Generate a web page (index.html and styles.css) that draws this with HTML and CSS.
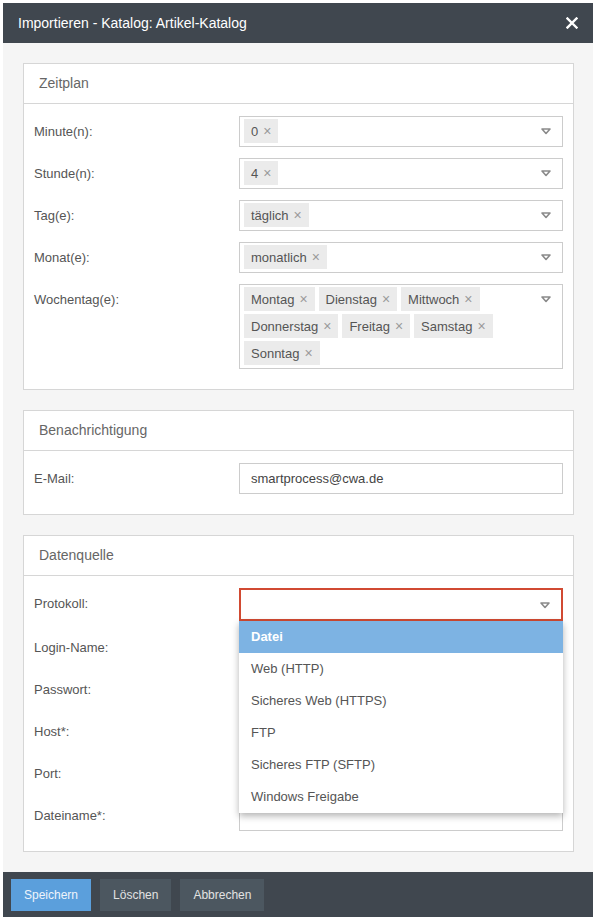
FILE: index.html
```html
<html>
    <head>
        <link rel="stylesheet" href="styles.css">
    </head>
    <body>
        <div class="modal">
            <div class="modal-header">
                <span class="title">Importieren - Katalog: Artikel-Katalog</span>
                <svg class="close" width="12" height="12" viewBox="0 0 12 12"><path d="M1.5 1.5 L10.5 10.5 M10.5 1.5 L1.5 10.5" stroke="#fff" stroke-width="2.4" stroke-linecap="square"/></svg>
            </div>

            <div class="modal-body">
                <div class="panel">
                    <div class="panel-heading">Zeitplan</div>
                    <div class="panel-body">
                        <div class="row">
                            <label>Minute(n):</label>
                            <div class="select">
                                <div class="tags"><span class="tag">0<span class="x">×</span></span></div>
                                <svg class="caret" width="10" height="7" viewBox="0 0 10 7"><path d="M1 1 H9 L5 5.5 Z" fill="none" stroke="#8a8a8a" stroke-width="1.6" stroke-linejoin="round"/></svg>
                            </div>
                        </div>
                        <div class="row">
                            <label>Stunde(n):</label>
                            <div class="select">
                                <div class="tags"><span class="tag">4<span class="x">×</span></span></div>
                                <svg class="caret" width="10" height="7" viewBox="0 0 10 7"><path d="M1 1 H9 L5 5.5 Z" fill="none" stroke="#8a8a8a" stroke-width="1.6" stroke-linejoin="round"/></svg>
                            </div>
                        </div>
                        <div class="row">
                            <label>Tag(e):</label>
                            <div class="select">
                                <div class="tags"><span class="tag">täglich<span class="x">×</span></span></div>
                                <svg class="caret" width="10" height="7" viewBox="0 0 10 7"><path d="M1 1 H9 L5 5.5 Z" fill="none" stroke="#8a8a8a" stroke-width="1.6" stroke-linejoin="round"/></svg>
                            </div>
                        </div>
                        <div class="row">
                            <label>Monat(e):</label>
                            <div class="select">
                                <div class="tags"><span class="tag">monatlich<span class="x">×</span></span></div>
                                <svg class="caret" width="10" height="7" viewBox="0 0 10 7"><path d="M1 1 H9 L5 5.5 Z" fill="none" stroke="#8a8a8a" stroke-width="1.6" stroke-linejoin="round"/></svg>
                            </div>
                        </div>
                        <div class="row">
                            <label>Wochentag(e):</label>
                            <div class="select">
                                <div class="tags">
                                    <span class="tag">Montag<span class="x">×</span></span>
                                    <span class="tag">Dienstag<span class="x">×</span></span>
                                    <span class="tag">Mittwoch<span class="x">×</span></span>
                                    <span class="tag">Donnerstag<span class="x">×</span></span>
                                    <span class="tag">Freitag<span class="x">×</span></span>
                                    <span class="tag">Samstag<span class="x">×</span></span>
                                    <span class="tag">Sonntag<span class="x">×</span></span>
                                </div>
                                <svg class="caret" width="10" height="7" viewBox="0 0 10 7"><path d="M1 1 H9 L5 5.5 Z" fill="none" stroke="#8a8a8a" stroke-width="1.6" stroke-linejoin="round"/></svg>
                            </div>
                        </div>
                    </div>
                </div>

                <div class="panel">
                    <div class="panel-heading">Benachrichtigung</div>
                    <div class="panel-body">
                        <div class="row">
                            <label>E-Mail:</label>
                            <div class="input">smartprocess@cwa.de</div>
                        </div>
                    </div>
                </div>

                <div class="panel">
                    <div class="panel-heading">Datenquelle</div>
                    <div class="panel-body">
                        <div class="row">
                            <label>Protokoll:</label>
                            <div class="select open">
                                <div class="tags"></div>
                                <svg class="caret" width="10" height="7" viewBox="0 0 10 7"><path d="M1 1 H9 L5 5.5 Z" fill="none" stroke="#8a8a8a" stroke-width="1.6" stroke-linejoin="round"/></svg>
                                <ul class="dropdown">
                                    <li class="active">Datei</li>
                                    <li>Web (HTTP)</li>
                                    <li>Sicheres Web (HTTPS)</li>
                                    <li>FTP</li>
                                    <li>Sicheres FTP (SFTP)</li>
                                    <li>Windows Freigabe</li>
                                </ul>
                            </div>
                        </div>
                        <div class="row">
                            <label>Login-Name:</label>
                            <div class="input"></div>
                        </div>
                        <div class="row">
                            <label>Passwort:</label>
                            <div class="input"></div>
                        </div>
                        <div class="row">
                            <label>Host*:</label>
                            <div class="input"></div>
                        </div>
                        <div class="row">
                            <label>Port:</label>
                            <div class="input"></div>
                        </div>
                        <div class="row">
                            <label>Dateiname*:</label>
                            <div class="input"></div>
                        </div>
                    </div>
                </div>
            </div>

            <div class="modal-footer">
                <a href="#" class="button primary">Speichern</a>
                <a href="#" class="button">Löschen</a>
                <a href="#" class="button">Abbrechen</a>
            </div>
        </div>
    </body>
</html>
```

FILE: styles.css
```css
html, body {
    margin: 0;
    padding: 0;
    background: #fff;
    font-family: "Liberation Sans", Arial, Helvetica, sans-serif;
    font-size: 13px;
    color: #555;
    height: 917px;
    overflow: hidden;
}
.modal {
    margin: 3px 3px 0 3px;
    background: #f5f5f5;
}
.modal-header {
    background: #40474f;
    height: 40px;
    padding: 0 15px;
    display: flex;
    align-items: center;
    justify-content: space-between;
}
.modal-header .title {
    color: #fff;
    font-size: 14px;
}
.modal-body {
    padding: 20px 19px 20px 20px;
}
.panel {
    background: #fff;
    border: 1px solid #d6d6d6;
    margin-bottom: 20px;
}
.panel:last-child {
    margin-bottom: 0;
}
.panel-heading {
    height: 39px;
    line-height: 39px;
    padding: 0 15px;
    font-size: 14px;
    color: #666;
    border-bottom: 1px solid #d6d6d6;
}
.panel-body {
    padding: 12px 10px 20px 10px;
    display: flex;
    flex-direction: column;
    gap: 11px;
}
.row {
    display: flex;
    align-items: flex-start;
}
.row label {
    width: 205px;
    flex: none;
    line-height: 31px;
    color: #555;
}
.select {
    position: relative;
    flex: 1;
    display: flex;
    align-items: flex-start;
    box-sizing: border-box;
    min-height: 31px;
    background: #fff;
    border: 1px solid #ccc;
    padding: 2px 11px 3px 4px;
}
.select.open {
    min-height: 33px;
    border: 2px solid #d14a32;
}
.tags {
    flex: 1;
    display: flex;
    flex-wrap: wrap;
    gap: 3px 4px;
    padding-right: 20px;
}
.tag {
    background: #ebebeb;
    color: #555;
    height: 24px;
    line-height: 24px;
    padding: 0 7px;
}
.tag .x {
    color: #9a9a9a;
    font-size: 14px;
    margin-left: 5px;
}
.caret {
    flex: none;
    margin-top: 9px;
}
.select.open .caret {
    margin-top: 10px;
}
.input {
    flex: 1;
    box-sizing: border-box;
    height: 31px;
    line-height: 29px;
    border: 1px solid #ccc;
    background: #fff;
    padding: 0 11px;
    color: #444;
}
.dropdown {
    position: absolute;
    top: calc(100% + 2px);
    left: -2px;
    right: -2px;
    margin: 0;
    padding: 0;
    list-style: none;
    background: #fff;
    box-shadow: 0 3px 7px rgba(0, 0, 0, 0.3);
    z-index: 10;
}
.dropdown li {
    height: 32px;
    line-height: 32px;
    padding: 0 12px;
    color: #555;
}
.dropdown li.active {
    background: #7db3e3;
    color: #fff;
    font-weight: bold;
}
.modal-footer {
    background: #40474f;
    height: 46px;
    padding: 7px 8px;
    box-sizing: border-box;
    display: flex;
    gap: 9px;
}
.button {
    display: inline-block;
    height: 32px;
    line-height: 32px;
    padding: 0 13px;
    font-size: 12px;
    color: #e2e2e2;
    background: #4c5760;
    text-decoration: none;
}
.button.primary {
    background: #5b9fdc;
    color: #eef4fb;
}
```
